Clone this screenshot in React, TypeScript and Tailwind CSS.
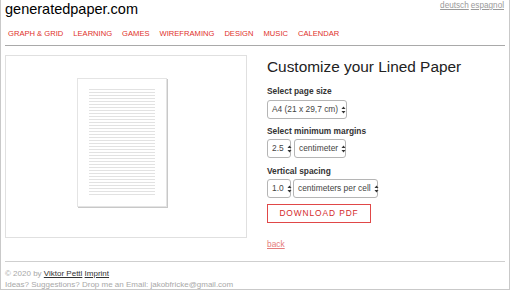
import React from 'react';

const font = { fontFamily: '"Liberation Sans", Arial, sans-serif' };

const navItems = ['GRAPH & GRID', 'LEARNING', 'GAMES', 'WIREFRAMING', 'DESIGN', 'MUSIC', 'CALENDAR'];

const Arrows = () => (
  <svg width="5" height="8" viewBox="0 0 5 8" className="ml-[3px] shrink-0">
    <path d="M2.5 0.5 L4.5 3 L0.5 3 Z" fill="#333" />
    <path d="M2.5 7.5 L4.5 5 L0.5 5 Z" fill="#333" />
  </svg>
);

const FakeSelect = ({ label, width }: { label: string; width: string }) => (
  <div
    className={`${width} h-[19px] flex items-center justify-between px-[4px] rounded-[3px] border border-[#b5b5b5] bg-white text-[8.4px] text-[#444]`}
  >
    <span className="whitespace-nowrap">{label}</span>
    <Arrows />
  </div>
);

const Paper = () => {
  const lines = [];
  for (let i = 0; i < 36; i++) {
    lines.push(<line key={i} x1="12" x2="78" y1={11.5 + i * 3} y2={11.5 + i * 3} stroke="#e2e2e2" strokeWidth="1" />);
  }
  return (
    <svg width="92" height="131" viewBox="0 0 92 131">
      <rect x="1" y="1" width="90" height="129" fill="#c8c8c8" />
      <rect x="0.5" y="0.5" width="89" height="128" fill="#fff" stroke="#e4e4e4" />
      {lines}
    </svg>
  );
};

export default function App() {
  return (
    <div style={font} className="w-[510px] h-[290px] bg-white border-l border-r border-b border-[#c9c9c9] text-[#222] overflow-hidden">
      {/* header */}
      <div className="flex justify-between px-[4px] h-[22px]">
        <div className="text-[14.5px] leading-[18px] text-black">generatedpaper.com</div>
        <div className="text-[8.2px] leading-[10px] pt-[1px] text-[#9a9a9a] flex gap-[2px] pr-[1px]">
          <span className="underline">deutsch</span>
          <span className="underline">espagnol</span>
        </div>
      </div>

      {/* nav */}
      <div className="flex gap-[10px] px-[7px] pt-[7px] text-[7.6px] leading-[10px] text-[#e0302a]">
        {navItems.map((n) => (
          <span key={n}>{n}</span>
        ))}
      </div>

      <div className="mx-[4px] mt-[6px] border-t border-[#a9a9a9]" />

      {/* main */}
      <div className="flex items-start gap-[20px] px-[4px] mt-[9px] h-[183px]">
        <div className="w-[242px] h-[183px] border border-[#e0e0e0] flex items-center justify-center">
          <div className="-mt-[7px] -ml-[7px]">
            <Paper />
          </div>
        </div>

        <div className="flex flex-col">
          <div className="text-[15.4px] leading-[18px] text-[#222] mt-[3px]">Customize your Lined Paper</div>

          <div className="text-[8.4px] font-bold leading-[10px] text-[#333] mt-[10px]">Select page size</div>
          <div className="mt-[4px]">
            <FakeSelect label="A4 (21 x 29,7 cm)" width="w-[80px]" />
          </div>

          <div className="text-[8.4px] font-bold leading-[10px] text-[#333] mt-[7px]">Select minimum margins</div>
          <div className="flex gap-[3px] mt-[3px]">
            <FakeSelect label="2.5" width="w-[24px]" />
            <FakeSelect label="centimeter" width="w-[52px]" />
          </div>

          <div className="text-[8.4px] font-bold leading-[10px] text-[#333] mt-[8px]">Vertical spacing</div>
          <div className="flex gap-[2px] mt-[3px]">
            <FakeSelect label="1.0" width="w-[24px]" />
            <FakeSelect label="centimeters per cell" width="w-[85px]" />
          </div>

          <div className="mt-[6px] w-[104px] h-[19px] border border-[#e04848] flex items-center justify-center text-[8.4px] tracking-[0.9px] text-[#d42a2a]">
            DOWNLOAD PDF
          </div>

          <div className="mt-[16px] text-[8.4px] leading-[10px] text-[#e57c7c] underline">back</div>
        </div>
      </div>

      <div className="mx-[4px] mt-[23px] border-t border-[#cfcfcf]" />

      {/* footer */}
      <div className="px-[4px] pt-[6px] text-[8px] leading-[11px] text-[#a8a8a8]">
        <div>
          © 2020 by <span className="text-[#333] underline">Viktor Pettl</span>{' '}
          <span className="text-[#333] underline">Imprint</span>
        </div>
        <div>Ideas? Suggestions? Drop me an Email: jakobfricke@gmail.com</div>
      </div>
    </div>
  );
}
